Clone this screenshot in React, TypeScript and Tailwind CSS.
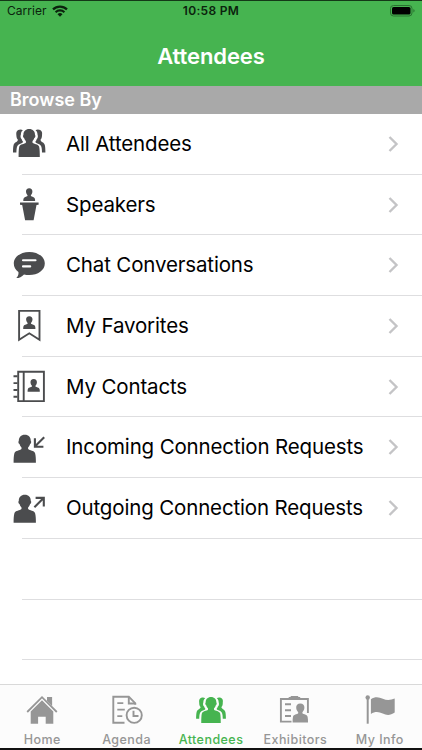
import type { ReactNode } from 'react';

const rows = [
  { label: 'All Attendees', icon: <GroupIcon /> },
  { label: 'Speakers', icon: <SpeakerIcon /> },
  { label: 'Chat Conversations', icon: <ChatIcon /> },
  { label: 'My Favorites', icon: <FavoriteIcon /> },
  { label: 'My Contacts', icon: <ContactsIcon /> },
  { label: 'Incoming Connection Requests', icon: <IncomingIcon /> },
  { label: 'Outgoing Connection Requests', icon: <OutgoingIcon /> },
];

const tabs = [
  { label: 'Home', icon: <HomeIcon /> },
  { label: 'Agenda', icon: <AgendaIcon /> },
  { label: 'Attendees', icon: <GroupTabIcon />, active: true },
  { label: 'Exhibitors', icon: <ExhibitorsIcon /> },
  { label: 'My Info', icon: <FlagIcon /> },
];

export default function App() {
  return (
    <div className="flex h-[750px] w-[422px] flex-col overflow-hidden border-t border-b-2 border-t-[#143817] border-b-[#111] bg-white font-['Inter',sans-serif] text-black">
      <header className="h-[85px] shrink-0 bg-[#46b450]">
        <StatusBar />
        <h1 className="pt-[19px] text-center text-[22px] leading-[32px] font-semibold tracking-[-0.1px] text-white">
          Attendees
        </h1>
      </header>

      <h2 className="h-[28px] shrink-0 bg-[#a9a9a9] pl-[10px] text-[18px] leading-[28px] font-semibold text-white">
        Browse By
      </h2>

      <main className="min-h-0 flex-1 overflow-hidden">
        {rows.map((row) => (
          <Row key={row.label} icon={row.icon}>
            <span className="flex-1 pt-px text-[20.5px] tracking-[-0.15px] whitespace-nowrap">{row.label}</span>
            <svg className="mr-[23px]" width="11" height="18" viewBox="0 0 11 18" fill="none" stroke="#c4c4c6" strokeWidth="2.4">
              <path d="M1.5 2l7 7-7 7" />
            </svg>
          </Row>
        ))}
        <Row />
        <Row />
      </main>

      <nav className="grid h-[64px] shrink-0 grid-cols-5 border-t border-[#d9d9d9] bg-[#fcfcfc]">
        {tabs.map((tab) => (
          <div
            key={tab.label}
            className={`flex flex-col items-center pt-[10px] ${tab.active ? 'text-[#46b450]' : 'text-[#969696]'}`}
          >
            {tab.icon}
            <span className="mt-[7px] whitespace-nowrap text-[12.5px] leading-[16px] font-medium tracking-[0.45px]">
              {tab.label}
            </span>
          </div>
        ))}
      </nav>
    </div>
  );
}

function Row({ icon, children }: { icon?: ReactNode; children?: ReactNode }) {
  return (
    <div className="flex h-[60.7px] pl-[13px]">
      <div className="flex w-[9px] shrink-0 items-center">
        {icon}
      </div>
      <div className="flex flex-1 items-center border-b border-[#dedee0] pl-[44px]">
        {children}
      </div>
    </div>
  );
}

function StatusBar() {
  return (
    <div className="grid h-[20px] grid-cols-3 items-center px-[7px] text-[12px] text-[#0b230d]">
      <div className="flex items-center gap-[5px]">
        <span className="tracking-[0.05px]">Carrier</span>
        <svg width="16" height="12" viewBox="0 0 16 12" fill="none" stroke="currentColor" strokeWidth="2.2">
          <path d="M1 4.4a10 10 0 0 1 14 0" />
          <path d="M3.6 7.2a6.3 6.3 0 0 1 8.8 0" />
          <path d="M8 11.8L5.5 9.3a3.5 3.5 0 0 1 5 0z" fill="currentColor" stroke="none" />
        </svg>
      </div>
      <span className="text-center font-semibold tracking-[0.3px] whitespace-nowrap">10:58 PM</span>
      <svg className="justify-self-end" width="25" height="12" viewBox="0 0 25 12">
        <rect x="0.5" y="0.5" width="21.5" height="10.5" rx="3" fill="none" stroke="#2a7231" />
        <rect x="2" y="2" width="18.5" height="7.5" rx="1.6" fill="#000" />
        <path d="M23.4 4v3.5q1.2-.5 1.2-1.75t-1.2-1.75z" fill="#2a7231" />
      </svg>
    </div>
  );
}

function RowSvg({ children }: { children: ReactNode }) {
  return (
    <svg className="shrink-0 overflow-visible" width="32" height="32" viewBox="0 0 32 32" fill="#4b4c4e">
      {children}
    </svg>
  );
}

function GroupShape() {
  return (
    <>
      <path d="M16.2.9c3.700 0 5.900 2.500 5.800 6 .7.300.5 2.700-.7 3.200-.4 1.500-1.100 2.400-1.800 3v1.600c1.500 1.500 5.600 1.200 6.600 3.800.6 2 .7 6.500.7 10.500H5.600c0-4 .1-8.500.7-10.500 1-2.600 5.100-2.300 6.600-3.800v-1.600c-.7-.6-1.400-1.500-1.800-3-1.200-.5-1.400-2.900-.7-3.200-.1-3.500 2.200-6 5.800-6z" />
      <path d="M9.900 2.200C8.200 1 4.800 1.200 3.600 3.700c-.6 1.500-.2 2.800-.2 4.100.1 1.900.7 3.200 1.500 4-.2 2.600-3.400 2-4.300 5.300C.1 19 0 22 0 24.400h3.400c.1-2.400.2-5.200 1.100-6.700 1.200-2 4.600-2 5.700-3.700-.8-.9-1.100-1.800-1.500-2.800-1.300-.9-1.500-3-.8-4.600 0-2 .6-3.300 2-4.400z" />
      <path d="M22.500 2.200c1.700-1.200 5.100-1 6.300 1.500.6 1.500.2 2.800.2 4.100-.1 1.900-.7 3.200-1.500 4 .2 2.600 3.400 2 4.300 5.300.5 1.900.6 4.900.6 7.300H29c-.1-2.400-.2-5.200-1.100-6.700-1.200-2-4.600-2-5.700-3.700.8-.9 1.100-1.800 1.500-2.800 1.300-.9 1.500-3 .8-4.600 0-2-.6-3.300-2-4.400z" />
    </>
  );
}

function GroupIcon() {
  return (
    <RowSvg>
      <GroupShape />
    </RowSvg>
  );
}

function SpeakerIcon() {
  return (
    <RowSvg>
      <path d="M16.200-.7c2.100 0 3.300 1.500 3.200 3.500-.1 1.500-.8 2.800-1.500 3.500v.8c1 .9 3.700.9 4 2.700.2.700.2 1.500.2 2.300H10.300c0-.8 0-1.600.2-2.300.3-1.800 3-1.800 4-2.700v-.8c-.7-.7-1.400-2-1.500-3.500-.1-2 1.100-3.500 3.200-3.500z" />
      <path d="M7 13.500h18.600v2.200l-2.100.4-2.900 15.200h-8.500L9.200 16.100l-2.200-.4z" />
    </RowSvg>
  );
}

function ChatIcon() {
  return (
    <RowSvg>
      <path d="M16.300 1.900C24.900 1.900 31.800 6.800 31.800 13.500S24.900 25.100 16.300 25.100c-1.900 0-3.700-.2-5.300-.7-2.200 2.500-4.800 3.600-7.700 3.600 1.700-1.600 2.500-3.700 2.100-5.900C2.500 20 .8 16.900.8 13.500.8 6.800 7.700 1.900 16.300 1.900z" />
      <path d="M10 10.200h12.500M10 16.400h7.200" stroke="#fff" strokeWidth="2.100" strokeLinecap="round" />
    </RowSvg>
  );
}

function FavoriteIcon() {
  return (
    <RowSvg>
      <path d="M6.100.9h20.400v28.900l-10.200-6.500-10.200 6.500z" fill="none" stroke="#4b4c4e" strokeWidth="1.900" />
      <MiniPerson x={16.3} y={6.2} />
    </RowSvg>
  );
}

function ContactsIcon() {
  return (
    <RowSvg>
      <path d="M5.200.8H30.900v29.300H5.200zM10.700.8v29.300" fill="none" stroke="#4b4c4e" strokeWidth="1.900" />
      <path d="M.5 5.200h4M.5 12.100h4M.5 19h4M.5 25.700h4" stroke="#4b4c4e" strokeWidth="1.900" />
      <MiniPerson x={20.700} y={8} />
    </RowSvg>
  );
}

function MiniPerson({ x, y }: { x: number; y: number }) {
  return (
    <path
      transform={`translate(${x} ${y})`}
      d="M0 0c2.200 0 3.300 1.500 3.200 3.400C3.100 4.900 2.400 6 1.700 6.700v.9C2.700 8.600 5.500 8.500 5.900 10.200c.2.700.2 1.700.2 2.500H-6.100c0-.8 0-1.800.2-2.500.4-1.700 3.200-1.600 4.200-2.600v-.9C-2.400 6-3.100 4.900-3.200 3.400-3.300 1.500-2.200 0 0 0z"
    />
  );
}

function PersonShape() {
  return (
    <path d="M11.800 2.700c3.900 0 6.100 2.600 6 6.200.7.300.5 2.700-.7 3.200-.4 1.500-1.100 2.600-2 3.400v1.600c1.600 1.600 6 1.400 7 4.100.7 2.100.8 6 .8 9.500H.6c0-3.500.1-7.400.8-9.500 1-2.700 5.500-2.500 7.100-4.100v-1.600c-.9-.8-1.600-1.900-2-3.400-1.200-.5-1.400-2.900-.7-3.200-.1-3.600 2.200-6.200 6-6.200z" />
  );
}

function IncomingIcon() {
  return (
    <RowSvg>
      <PersonShape />
      <path d="M31.200 5.200l-9.300 9.300M21.900 6.300v8.400h8.500" fill="none" stroke="#4b4c4e" strokeWidth="2.100" />
    </RowSvg>
  );
}

function OutgoingIcon() {
  return (
    <RowSvg>
      <PersonShape />
      <path d="M21.400 15.300l9.200-9.200M22.600 5.900h8.200v8.600" fill="none" stroke="#4b4c4e" strokeWidth="2.100" />
    </RowSvg>
  );
}

function TabSvg({ children }: { children: ReactNode }) {
  return (
    <svg className="shrink-0" width="32" height="30" viewBox="0 0 32 30" fill="currentColor">
      {children}
    </svg>
  );
}

function HomeIcon() {
  return (
    <TabSvg>
      <path d="M1.200 17L16 2.200 30.800 17" fill="none" stroke="currentColor" strokeWidth="1.800" />
      <path d="M21 2h5.100v9L21 6z" />
      <path d="M16 5.300l11.300 11.300v12.200h-7.600V21.700h-7.600v7.100H4.700V16.600z" />
    </TabSvg>
  );
}

function AgendaIcon() {
  return (
    <TabSvg>
      <g fill="none" stroke="currentColor" strokeWidth="1.900">
        <path d="M13.500 27.700H2.300V1.700h15.500l6.500 6.700v1.400" />
        <path d="M17.800 2v6.500h6.500" />
        <path d="M6.300 8.200h6M6.300 14.700h7.500M6.300 21.200h5" strokeWidth="1.800" />
        <circle cx="23.200" cy="20.300" r="7.600" />
        <path d="M22.500 15.800v5.200h5" />
      </g>
    </TabSvg>
  );
}

function GroupTabIcon() {
  return (
    <TabSvg>
      <g transform="translate(1.100 1.200) scale(0.92)">
        <GroupShape />
      </g>
    </TabSvg>
  );
}

function ExhibitorsIcon() {
  return (
    <TabSvg>
      <path d="M12.500 26.600H1.900V4h27v14" fill="none" stroke="currentColor" strokeWidth="1.900" />
      <path d="M9.700 4V1.900h2V1h7.500v.9h2V4z" />
      <path d="M6 9.300h6M6 15.200h6M6 21h6" stroke="currentColor" strokeWidth="1.900" />
      <path d="M21.300 8.500c2.800 0 4.200 1.900 4.100 4.300-.1 2-1 3.500-2 4.400v1.100c1.300 1.300 4.600 1.100 5.200 3.400.4 1.800.4 3.900.4 5.900H13.600c0-2 0-4.100.4-5.900.6-2.300 3.900-2.100 5.200-3.400v-1.100c-1-.9-1.900-2.400-2-4.400-.1-2.400 1.300-4.300 4.100-4.300z" />
    </TabSvg>
  );
}

function FlagIcon() {
  return (
    <TabSvg>
      <circle cx="3.700" cy="2.500" r="2.200" />
      <path d="M2.700 3h2v25.700h-2z" />
      <path d="M6.900 4.200c4-2.600 7.800-2.300 11.900-.4 4 1.800 7.800 1.500 11.900-.2v14c-4.200 3.100-8 3.100-12 1-4.100-2.100-7.900-2-11.800.3z" />
    </TabSvg>
  );
}
